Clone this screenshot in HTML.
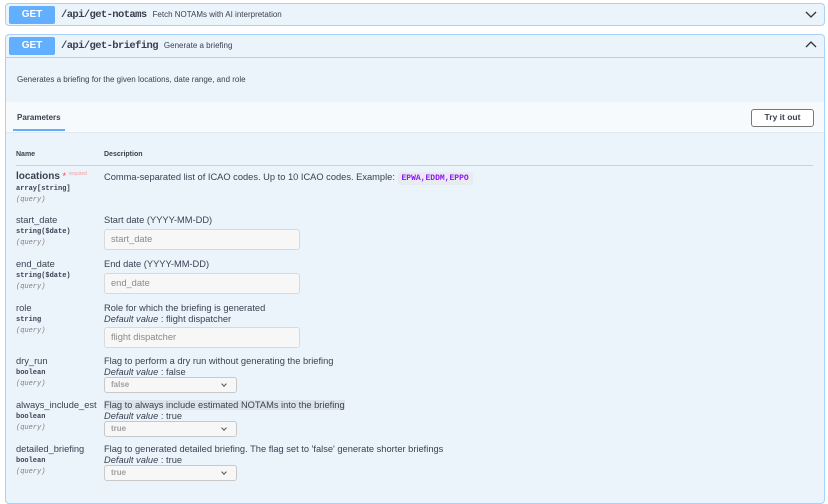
<!DOCTYPE html>
<html><head><style>
*{box-sizing:border-box;margin:0;padding:0}
body{width:828px;height:488px;overflow:hidden;background:#fff;font-family:"Liberation Sans",sans-serif;color:#3b4151;position:relative}
.op{position:absolute;left:5px;right:3px;border:1px solid #a9d1fb;border-radius:4px;background:#ebf3fb}
.badge{position:absolute;left:3px;top:2px;width:46px;height:18px;background:#61affe;color:#fff;font-weight:bold;font-size:10px;text-align:center;line-height:18px;border-radius:2px}
.path{position:absolute;left:55px;top:5px;font-family:"Liberation Mono",monospace;font-weight:bold;font-size:10.5px;letter-spacing:-0.6px;color:#3b4151}
.sum{font-size:8px;color:#3b4151;font-family:'Liberation Sans',sans-serif;font-weight:normal;margin-left:6px;letter-spacing:0}
.chev{position:absolute;right:7px;top:5px}
.mono{font-family:"Liberation Mono",monospace}
.pn{position:absolute;left:16px;font-size:9.3px;color:#3b4151}
.pt{font-family:"Liberation Mono",monospace;font-size:7px;font-weight:bold;color:#3b4151;display:block;margin-top:3px}
.pq{font-family:"Liberation Mono",monospace;font-size:7px;font-style:italic;color:#808080;display:block;margin-top:3px}
.d{position:absolute;left:104px;font-size:9.3px;color:#3b4151;line-height:11px}
.inp{position:absolute;left:104px;width:196px;height:21px;border:1px solid #d9d9d9;border-radius:3px;background:#f7f7f7;font-size:9.3px;color:#8a8a8a;padding-left:6px;line-height:19px}
.sel{position:absolute;left:104px;width:133px;height:16px;border:1px solid #c8c8c8;border-radius:3px;background:#f7f7f7;font-size:8px;color:#a0a0a0;padding-left:6px;line-height:14px;font-weight:bold}
.sel:after{content:"";position:absolute;right:10px;top:4px;width:3px;height:3px;border-right:1px solid #555;border-bottom:1px solid #555;transform:rotate(45deg)}
</style></head><body>
<div class="op" style="top:3px;height:23px">
 <div class="badge">GET</div>
 <div class="path">/api/get-notams<span class="sum">Fetch NOTAMs with AI interpretation</span></div>
 <svg class="chev" width="12" height="10" viewBox="0 0 12 10"><path d="M1 3l5 5 5-5" fill="none" stroke="#333" stroke-width="1.3"/></svg>
</div>
<div class="op" style="top:34px;height:470px">
 <div style="height:23px;position:relative;border-bottom:1px solid #a9d1fb">
  <div class="badge">GET</div>
  <div class="path">/api/get-briefing<span class="sum">Generate a briefing</span></div>
  <svg class="chev" style="top:5px" width="12" height="10" viewBox="0 0 12 10"><path d="M1 7l5-5 5 5" fill="none" stroke="#333" stroke-width="1.3"/></svg>
 </div>
 <div style="position:absolute;top:40px;left:11px;font-size:8px">Generates a briefing for the given locations, date range, and role</div>
 <div style="position:absolute;top:67px;left:0;right:0;height:31px;background:#f7fafd;border-bottom:1px solid #e4e9ef">
  <div style="position:absolute;left:11px;top:11px;font-size:8px;font-weight:bold">Parameters</div>
  <div style="position:absolute;left:7px;top:27px;width:52px;height:2px;background:#61affe"></div>
  <div style="position:absolute;right:10px;top:7px;width:63px;height:18px;border:1.5px solid #777;border-radius:3px;background:#fff;font-size:8.5px;font-weight:bold;text-align:center;line-height:15px">Try it out</div>
 </div>
</div>
<div style="position:absolute;left:16px;top:151px;font-size:7px;font-weight:bold">Name</div>
<div style="position:absolute;left:104px;top:151px;font-size:7px;font-weight:bold">Description</div>
<div style="position:absolute;left:16px;right:15px;top:165px;height:1px;background:#c9d3df"></div>

<div class="pn" style="top:171px"><b style="font-size:10px">locations</b> <span style="color:#f93e3e;font-size:9px">*</span> <span style="color:#f9a0a0;font-size:5px;vertical-align:top">required</span><span class="pt">array[string]</span><span class="pq">(query)</span></div>
<div class="d" style="top:172px">Comma-separated list of ICAO codes. Up to 10 ICAO codes. Example: <span class="mono" style="background:#e8ebf0;color:#9012fe;font-weight:bold;font-size:8px;padding:2px 4px;border-radius:3px">EPWA,EDDM,EPPO</span></div>

<div class="pn" style="top:215px">start_date<span class="pt">string($date)</span><span class="pq">(query)</span></div>
<div class="d" style="top:215px">Start date (YYYY-MM-DD)</div>
<div class="inp" style="top:229px">start_date</div>

<div class="pn" style="top:259px">end_date<span class="pt">string($date)</span><span class="pq">(query)</span></div>
<div class="d" style="top:259px">End date (YYYY-MM-DD)</div>
<div class="inp" style="top:273px">end_date</div>

<div class="pn" style="top:303px">role<span class="pt">string</span><span class="pq">(query)</span></div>
<div class="d" style="top:303px">Role for which the briefing is generated<br><i>Default value</i> : flight dispatcher</div>
<div class="inp" style="top:327px">flight dispatcher</div>

<div class="pn" style="top:356px">dry_run<span class="pt">boolean</span><span class="pq">(query)</span></div>
<div class="d" style="top:356px">Flag to perform a dry run without generating the briefing<br><i>Default value</i> : false</div>
<div class="sel" style="top:377px">false</div>

<div class="pn" style="top:400px">always_include_est<span class="pt">boolean</span><span class="pq">(query)</span></div>
<div class="d" style="top:400px"><span style="background:#dde3ea">Flag to always include estimated NOTAMs into the briefing</span><br><i>Default value</i> : true</div>
<div class="sel" style="top:421px">true</div>

<div class="pn" style="top:444px">detailed_briefing<span class="pt">boolean</span><span class="pq">(query)</span></div>
<div class="d" style="top:444px">Flag to generated detailed briefing. The flag set to 'false' generate shorter briefings<br><i>Default value</i> : true</div>
<div class="sel" style="top:465px">true</div>
</body></html>
